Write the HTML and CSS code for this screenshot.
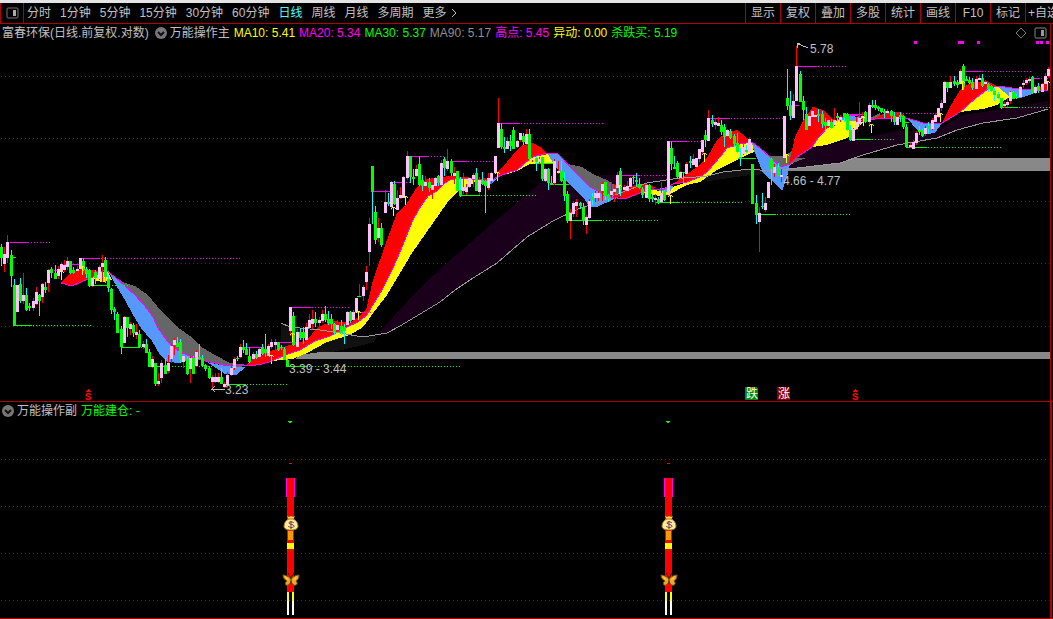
FILE: index.html
```html
<!DOCTYPE html>
<html lang="zh-CN">
<head>
    <meta charset="UTF-8">
    <meta name="viewport" content="width=device-width, initial-scale=1.0">
    <title>富春环保 日线</title>
    <link rel="stylesheet" href="styles.css">
</head>
<body>
    <header class="toolbar">
        <button class="layout-btn" aria-label="布局">
            <svg width="13" height="12" viewBox="0 0 13 12"><rect x="1" y="1" width="11" height="10" rx="1" fill="none" stroke="#777"/><rect x="7" y="3" width="3" height="6" fill="#aaa"/></svg>
        </button>
        <nav class="periods">
            <button>分时</button>
            <button>1分钟</button>
            <button>5分钟</button>
            <button>15分钟</button>
            <button>30分钟</button>
            <button>60分钟</button>
            <button class="active">日线</button>
            <button>周线</button>
            <button>月线</button>
            <button>多周期</button>
            <button class="more">更多<svg width="7" height="10" viewBox="0 0 7 10"><path d="M1 1l4 4-4 4" fill="none" stroke="#c0c0c0"/></svg></button>
        </nav>
        <div class="tools">
            <button>显示</button>
            <button>复权</button>
            <button>叠加</button>
            <button>多股</button>
            <button>统计</button>
            <button>画线</button>
            <button>F10</button>
            <button>标记</button>
            <button class="cut">+自选</button>
        </div>
    </header>
    <main>
        <section class="panel main-panel">
            <div class="legend">
                <span class="stock">富春环保(日线.前复权.对数)</span>
                <button class="fold" aria-label="主图指标"><svg width="13" height="13" viewBox="0 0 13 13"><circle cx="6" cy="6" r="6" fill="#777"/><path d="M3 5l3 3 3-3" fill="none" stroke="#111" stroke-width="2"/></svg></button>
                <span class="name">万能操作主</span>
                <span class="yellow">MA10: 5.41</span>
                <span class="magenta">MA20: 5.34</span>
                <span class="green">MA30: 5.37</span>
                <span class="gray">MA90: 5.17</span>
                <span class="magenta">高点: 5.45</span>
                <span class="yellow">异动: 0.00</span>
                <span class="green">杀跌买: 5.19</span>
                <span class="corner">
                    <svg width="11" height="11" viewBox="0 0 11 11"><path d="M5 0l5 5-5 5-5-5z" fill="none" stroke="#777"/></svg>
                    <svg width="13" height="12" viewBox="0 0 13 12"><rect x="1" y="1" width="11" height="10" rx="1" fill="none" stroke="#888"/><rect x="7" y="3" width="3" height="6" fill="#999"/></svg>
                </span>
            </div>
            <svg class="chart" viewBox="0 40 1053 361" role="img" aria-label="K线图">
                <path id="gridMain" class="grid"/>
                <g class="bands">
                    <!-- long term cloud -->
                    <path fill="#111" d="M281 323L290 327 320 330 340 333 363 337 377 336 374 342 363 345 333 352 307 357 281 360z"/>
                    <path fill="#111" d="M700 177L723 172 750 169 770 171 784 170 784 173 750 175 730 178 708 181z"/>
                    <path fill="#1a001a" d="M377 335L393 317 420 288 447 263 493 223 540 183 552 174 665 176 680 179 647 183 620 193 600 202 580 208 553 221 527 237 497 263 470 280 455 290 440 302 400 326 387 333z"/>
                    <!-- support zones -->
                    <path fill="#888" d="M295 359L300 355 320 352H1050V359z"/>
                    <path fill="#888" d="M786 171L790 162 806 158H1050V171z"/>
                    <path fill="#1a001a" d="M787 168L813 147 853 140 897 131 937 130 963 115 997 110 1048 101V109L1017 118 983 123 957 130 937 138 897 145 863 155 840 163 797 168z"/>
                    <!-- falling clouds -->
                    <path fill="#666" d="M115 277L125 283 135 286 148 295 157 306 170 320 180 329 190 336 200 346 215 355 230 363 248 365 240 367 225 366 205 361 195 358 180 352 168 342 158 328 153 317 145 306 135 295 125 286z"/>
                    <path fill="#666" d="M568 164L582 167 593 174 607 180 618 187 625 193 617 198 603 195 590 187 580 177z"/>
                    <path fill="#666" d="M767 156H785L792 151 794 158 806 158 790 164 781 167zM868 119L880 113 880 118z"/>
                    <path fill="#59f" d="M108 271L115 277 125 286 135 295 145 306 153 317 158 328 168 342 180 352 195 358 190 359 180 363 168 362 160 355 152 341 141 328 133 315 125 300 117 287zM207 362L225 366 246 367 236 375 225 374z"/>
                    <path fill="#59f" d="M545 153H557L562 158 570 167 580 177 590 187 600 192 617 198 612 200 597 207H590L585 200 570 185 563 177 550 158z"/>
                    <path fill="#59f" d="M751 142L760 148 770 157 781 167 790 164 787 177 782 191 777 185 763 173 755 153zM657 189L673 186 671 193 664 194zM480 181H492L497 178 491 184z"/>
                    <path fill="#59f" d="M838 119L847 115 858 117 862 121 850 124zM907 118L923 123 942 123 935 133 927 134 917 130zM997 86L1020 89 1038 91 1030 95 1020 98 1010 97z"/>
                    <!-- rising clouds -->
                    <path fill="red" d="M61 283L66 277 73 271 84 269 98 271 102 272 90 278 80 282 72 286zM197 357l6 1 3 4-9-3z"/>
                    <path fill="red" d="M245 366L253 358 273 350 307 340 318 327 333 321 350 323 357 318 366 310 373 280 387 240 397 213 407 203 417 187 427 179 450 176 475 178 450 180 445 183 437 191 428 196 419 209 413 220 408 232 403 245 393 268 382 290 371 308 367 315 358 322 347 327 330 336 315 341 300 350 285 355 272 361 262 364z"/>
                    <path fill="red" d="M475 180L485 178 490 180 480 182zM497 177L498 172 507 162 517 150 523 145 533 143 540 147 548 154 533 157 525 163 517 170 507 173z"/>
                    <path fill="red" d="M612 197L623 191 637 184H647L657 188 650 189 640 193 627 198z"/>
                    <path fill="red" d="M673 184L683 177 697 167 707 158 717 140 727 132 737 130 747 138 752 142 740 144 727 148 720 157 707 172 700 177 687 182z"/>
                    <path fill="red" d="M789 164L795 137 803 121 813 107 823 110 833 119 837 120 827 128 818 138 812 147 797 157zM873 119L887 112H900L907 118z"/>
                    <path fill="red" d="M942 123L950 107 960 90 970 83 987 81 997 86 988 89 977 97 960 112zM1034 91L1048 82V91z"/>
                    <path fill="#ff0" d="M92 277L100 272 108 272 112 280 104 282 96 281z"/>
                    <path fill="#ff0" d="M272 361L285 355 300 350 315 341 330 336 347 327 358 322 367 315 371 308 382 290 393 268 403 245 408 232 413 220 419 209 428 196 437 191 445 183 450 180 457 178 470 178 477 181 467 187 457 192 447 203 433 223 412 253 387 295 377 308 363 327 350 335 327 342 307 353 293 359z"/>
                    <path fill="#ff0" d="M497 177L507 173 517 170 525 163 533 157 548 154 553 163 540 164 530 164 517 171zM640 193L650 190 663 191 668 193 664 197 650 194z"/>
                    <path fill="#ff0" d="M673 187L687 182 700 177 707 172 720 157 727 148 740 144 752 142 754 152 747 155 733 162 717 170 700 182 687 185 668 195z"/>
                    <path fill="#ff0" d="M812 147L818 138 827 128 837 120 850 121 863 122 855 130 847 138 827 145zM960 112L977 97 988 89 997 86 1010 97 997 105 983 109z"/>
                </g>
                <polyline class="ma20" points="61,283 72,286 90,278 105,270 115,277 125,286 135,295 145,306 153,317 158,328 168,342 180,352 195,358 205,361 225,365 250,366 262,364 272,361 285,355 300,350 315,341 330,336 347,327 358,322 367,315 371,308 382,290 393,268 403,245 408,232 413,220 419,209 428,196 437,191 445,183 450,180 457,178 470,178 475,180 492,180 497,177 507,173 517,170 525,163 533,157 543,154 557,153 562,158 570,167 580,177 590,187 600,192 603,195 617,198 627,198 640,193 650,189 663,190 673,184 687,182 700,177 707,172 720,157 727,148 740,144 752,142 760,148 770,157 781,167 790,164 797,157 812,147 818,138 827,128 837,120 847,115 858,116 865,121 880,118 907,118 923,123 942,123 960,112 977,97 988,89 997,86 1020,89 1048,91"/>
                <polyline class="ma90" points="281,323 290,327 320,330 340,333 363,337 387,333 400,326 440,302 455,290 470,280 497,263 527,237 553,221 580,208 597,203 620,193 647,183 673,179 707,176 723,172 750,169 770,171 797,168 840,163 863,155 897,145 937,138 957,130 983,123 1017,118 1048,109"/>
                <path id="levelsHigh" fill="#f0f"/>
                <path id="levelsLow" fill="#0f0"/>
                <path id="wickUp" fill="red"/>
                <path id="wickDown" fill="#0ff"/>
                <path id="bodyUp" fill="#ffc0ff"/>
                <path id="bodyDown" fill="#0f0"/>
                <path id="flags" fill="#ff0"/>
                <path fill="#f0f" d="M914 41h3v3h-3zM958 41h6v3h-6zM977 41h3v3h-3zM1036 41h3v3h-3zM1040 41h3v3h-3zM1046 41h3v3h-3z"/>
                <g class="marks">
                    <path d="M800 43h-3v5M797 44l4 1 7 3"/>
                    <path d="M225 389h-13l3-3M212 389l3 3"/>
                    <text x="810" y="53">5.78</text>
                    <text x="225" y="394">3.23</text>
                    <text x="289" y="373">3.39 - 3.44</text>
                    <text x="783" y="185">4.66 - 4.77</text>
                </g>
                <g class="signs">
                    <path fill="red" d="M85 392l3-3 3 3zM852 392l3-3 3 3z"/>
                    <text class="dollar" x="88" y="400">S</text>
                    <text class="dollar" x="855" y="400">S</text>
                    <path fill="#080" d="M745 387h11l2 2v11h-13z"/>
                    <path fill="#800" d="M777 387h11l2 2v11h-13z"/>
                    <text x="752" y="398">跌</text>
                    <text x="784" y="398">涨</text>
                </g>
            </svg>
        </section>
        <section class="panel sub-panel">
            <div class="legend">
                <button class="fold" aria-label="副图指标"><svg width="13" height="13" viewBox="0 0 13 13"><circle cx="6" cy="6" r="6" fill="#777"/><path d="M3 5l3 3 3-3" fill="none" stroke="#111" stroke-width="2"/></svg></button>
                <span class="name">万能操作副</span>
                <span class="green">万能建仓: -</span>
            </div>
            <svg class="chart" viewBox="0 418 1053 200" role="img" aria-label="副图">
                <defs>
                    <g id="signal">
                        <path fill="#0f0" d="M-3 421h4v1h-1v1h-2v-1h-1z"/>
                        <path fill="red" d="M-2 463h3v1h-3z"/>
                        <path fill="#f0f" d="M-5 478h9v19h-9z"/>
                        <path fill="red" d="M-4 478h7v114h-7z"/>
                        <path fill="#f90" d="M-3 531h5v9h-5z"/>
                        <path fill="#ff0" d="M-4 543h7v6h-7zM-4 592h2v9h-2zM1 592h2v9h-2z"/>
                        <path fill="#fff" d="M-4 601h2v14h-2zM1 601h2v14h-2z"/>
                        <g class="smooth">
                            <path fill="#fd3" d="M-4 516l2 1 2-1 2 1 2-1-2 4h-4z"/>
                            <path fill="#ffeb9a" stroke="#a87820" d="M-2 519h4c3 1 5 4 5 7 0 3-3 4-7 4s-7-1-7-4c0-3 2-6 5-7z"/>
                            <circle cy="525" r="3" fill="#fff4cf"/>
                            <path fill="none" stroke="#733028" d="M3 523c-1-1-5-2-5 0s5 1 5 3-4 2-6 0M0 521v8"/>
                        </g>
                        <g class="smooth">
                            <path fill="#e8ab20" stroke="#85500c" d="M0 579c-3-3-6-4-8-4 0 3 2 5 4 6-2 1-2 3-1 4 2 1 4-1 5-4 1 3 3 5 5 4 2-1 1-3 0-4 2-1 3-3 3-6-3 0-5 1-8 4z"/>
                            <path fill="#ffd65a" d="M-6 576l4 4-3-1zM6 576l-4 4 3-1z"/>
                            <path fill="none" stroke="#421" d="M-3 573l3 5 3-5M0 578v6"/>
                        </g>
                    </g>
                </defs>
                <path id="gridSub" class="grid"/>
                <use href="#signal" x="291"/>
                <use href="#signal" x="669"/>
            </svg>
        </section>
    </main>
    <script src="script.js"></script>
</body>
</html>
```
FILE: styles.css
```css
body {
    margin: 0;
    background: #000;
    color: #c0c0c0;
    font-family: "Liberation Sans", "Noto Sans CJK SC", sans-serif;
    font-size: 12px;
    line-height: 16px;
}
button {
    padding: 0;
    border: none;
    background: none;
    color: inherit;
    font: inherit;
    white-space: nowrap;
    cursor: pointer;
}
.toolbar {
    display: flex;
    height: 20px;
    border-top: 3px solid #e4e4e4;
    border-bottom: 1px solid #b00000;
    overflow: hidden;
}
.layout-btn {
    display: flex;
    align-items: center;
    justify-content: center;
    width: 24px;
    border-left: 1px solid #b00000;
    border-right: 1px solid #b00000;
    box-sizing: border-box;
    flex: none;
}
.periods {
    display: flex;
    gap: 9px;
    padding-left: 3px;
    flex: 1;
}
.periods .active {
    color: #54fcfc;
}
.more {
    display: flex;
    align-items: center;
    gap: 4px;
}
.tools {
    display: flex;
    flex: none;
}
.tools button {
    width: 35px;
    border-left: 1px solid #b00000;
    box-sizing: border-box;
}
.tools .cut {
    width: 28px;
    padding-left: 2px;
    text-align: left;
    overflow: hidden;
}
.panel {
    border-bottom: 1px solid #b00000;
    background: linear-gradient(#b00000, #b00000) no-repeat right 2px top / 1px 100%;
}
.sub-panel {
    background-size: 2px 100%;
    background-position: right 1px top;
}
.legend {
    display: flex;
    align-items: center;
    gap: 4px;
    box-sizing: border-box;
    height: 16px;
    padding: 2px 6px 0 2px;
    white-space: nowrap;
}
.stock {
    margin-right: 2px;
}
.fold {
    display: flex;
}
.fold + .name {
    margin-left: -2px;
}
.corner {
    display: flex;
    align-items: center;
    gap: 7px;
    margin-left: auto;
}
.yellow {
    color: #ff0;
}
.magenta {
    color: #f0f;
}
.green {
    color: #0f0;
}
.gray {
    color: #909090;
}
.chart {
    display: block;
    width: 100%;
    height: auto;
    overflow: visible;
    shape-rendering: crispEdges;
}
.grid {
    fill: #b00000;
}
.ma20 {
    fill: none;
    stroke: #f0f;
}
.ma90 {
    fill: none;
    stroke: #999;
}
.marks path {
    fill: none;
    stroke: #c0c0c0;
}
.marks text {
    fill: #c0c0c0;
}
.signs text {
    fill: #fff;
    text-anchor: middle;
}
.signs .dollar {
    fill: red;
    font-family: "Liberation Mono", monospace;
    font-weight: bold;
    font-size: 11px;
}
.smooth {
    shape-rendering: auto;
}
```
FILE: script.js
```javascript
// x, high, body top, body bottom, low; u = up, d = down
const candles = `
1 244 247 258 266 d,4 247 254 264 272 u,7 235 242 258 263 u,11 250 255 276 287 d,14 279 285 326 326 d,17 285 285 312 312 u,20 278 284 301 303 d,23 273 295 301 304 u,26 288 295 310 311 d,29 303 306 308 311 d,
33 298 301 308 311 u,36 287 292 304 305 u,39 294 295 301 316 d,42 283 284 297 303 u,45 282 287 290 293 d,48 269 270 283 292 u,51 267 269 273 278 d,55 265 273 279 279 d,58 266 269 276 279 u,61 262 264 271 273 u,
64 260 265 270 272 u,67 257 261 267 270 u,70 261 261 273 274 d,73 267 270 273 274 d,77 266 269 271 272 u,80 258 258 269 270 u,83 258 261 270 271 d,86 267 269 274 278 d,89 269 270 286 287 d,92 275 278 286 287 u,
95 270 272 278 284 d,99 265 267 279 280 u,102 255 263 267 282 u,105 257 260 277 283 d,108 275 279 288 292 d,111 288 289 310 314 d,114 307 309 312 320 d,117 312 314 333 333 d,121 326 329 347 354 d,124 316 317 343 343 u,
127 317 317 328 337 d,130 322 324 329 335 u,133 323 325 333 337 d,136 324 332 335 339 u,139 330 334 347 348 d,143 341 344 347 349 u,146 339 344 353 353 d,149 349 352 367 367 d,152 356 359 367 368 u,155 363 363 384 386 d,
158 373 381 384 386 u,161 360 363 378 383 u,165 358 365 374 374 d,168 355 363 371 373 u,171 344 346 359 363 u,174 338 340 345 355 u,177 337 343 347 347 d,180 339 342 360 363 d,183 356 356 362 368 u,187 356 359 374 375 d,
190 356 358 369 383 u,193 356 358 374 374 d,196 350 352 366 367 u,199 344 357 359 360 d,202 355 358 366 367 d,205 364 365 369 371 d,209 366 368 378 379 d,212 375 377 382 389 u,215 373 377 382 383 u,218 373 377 382 383 u,
221 368 377 384 384 d,224 382 384 387 388 u,227 372 375 385 388 u,231 364 368 375 376 u,234 357 359 368 370 u,237 356 358 359 361 d,240 344 347 357 358 u,243 340 347 350 353 d,246 343 349 355 355 d,249 347 356 362 363 d,
253 352 354 359 359 u,256 351 354 358 359 d,259 347 349 357 357 u,262 344 347 354 355 d,265 334 349 353 357 d,268 344 346 356 357 u,271 339 342 347 349 u,275 339 342 345 349 u,278 342 342 350 351 d,281 345 347 348 350 d,
284 347 349 360 360 d,287 358 360 367 367 d,290 307 307 331 336 u,293 312 316 345 346 d,297 329 332 347 351 u,300 328 332 338 340 d,303 327 332 338 344 d,306 323 327 340 340 u,309 314 320 328 329 u,312 310 319 324 329 u,
315 312 319 323 327 d,319 317 320 323 327 u,322 310 314 321 323 u,325 306 314 320 322 d,328 311 319 323 325 d,331 314 319 324 329 d,334 323 324 332 335 d,337 320 325 330 331 u,341 320 326 333 335 d,344 324 327 331 344 d,
347 311 312 325 327 u,350 311 312 321 323 d,353 310 312 320 322 u,356 298 298 312 313 u,363 285 287 296 301 u,366 266 272 282 290 u,369 218 224 252 266 u,372 166 166 192 224 d,375 206 212 240 244 d,378 218 228 238 242 u,
381 223 228 245 247 d,385 190 202 213 213 u,388 193 202 204 206 d,391 181 182 207 210 u,394 181 184 204 205 d,397 190 198 210 210 u,400 187 195 198 199 u,403 176 177 198 198 u,407 151 156 178 180 u,410 156 156 177 183 d,
413 169 177 179 185 d,416 165 169 176 177 u,419 156 164 185 186 d,422 175 180 186 191 d,425 176 182 186 186 u,429 178 182 188 192 d,432 185 185 190 199 u,435 177 178 186 190 u,438 175 176 183 186 d,441 160 163 185 185 u,
444 157 159 168 176 d,447 149 161 169 171 u,451 159 161 173 176 d,454 167 173 176 184 u,457 171 171 191 191 d,460 177 190 196 197 d,463 173 187 191 194 u,466 184 187 192 195 u,469 178 178 187 188 u,473 173 175 179 187 u,
476 168 173 191 191 d,479 177 180 192 195 u,482 172 180 184 185 d,485 180 181 186 213 d,488 173 178 188 190 u,491 172 173 181 184 u,495 156 156 173 173 u,498 98 123 148 148 u,501 123 129 147 149 d,504 137 147 149 153 d,
507 137 141 149 149 u,510 135 141 146 151 d,513 127 130 149 149 d,517 140 141 147 148 u,520 133 133 140 142 u,523 133 136 142 145 d,526 129 134 144 145 u,529 129 134 159 161 d,532 157 158 160 162 u,536 156 158 162 171 d,
539 157 159 162 164 u,542 157 157 179 181 d,545 168 169 181 182 u,548 168 169 183 190 d,551 176 183 184 185 d,554 159 161 183 185 u,558 161 171 173 174 u,561 161 171 181 182 d,564 172 180 196 201 d,567 191 194 221 223 d,
570 209 213 221 239 u,573 201 203 214 217 u,576 199 202 206 217 u,580 202 203 206 209 d,583 203 207 221 225 d,586 215 217 225 234 u,589 199 201 218 219 u,592 193 197 200 205 d,595 191 193 198 202 u,598 191 193 198 201 u,
602 182 184 191 201 u,605 182 182 196 200 d,608 194 195 199 202 d,611 182 191 195 198 u,614 184 189 192 202 u,617 172 175 188 190 u,620 168 171 190 196 d,624 185 187 190 191 u,627 181 186 191 191 u,630 177 178 187 188 u,
633 175 177 178 184 d,636 173 180 182 186 d,639 178 184 188 189 d,642 187 189 195 198 d,646 185 185 198 198 u,649 184 185 199 202 d,652 195 197 199 202 d,655 194 198 200 205 u,658 197 199 203 204 d,661 182 193 202 202 u,
664 190 191 200 201 d,668 141 141 195 197 u,671 141 148 164 170 d,674 156 167 169 169 d,677 161 163 177 179 d,680 171 172 178 179 u,683 172 172 173 183 d,686 162 164 174 174 u,690 156 161 163 168 d,693 154 159 165 165 u,
696 158 158 167 167 u,699 149 149 159 162 u,702 140 140 152 155 u,705 130 135 140 147 d,708 110 118 141 141 u,712 115 120 124 127 d,715 118 122 125 129 u,718 117 123 126 126 u,721 120 125 132 135 d,724 124 127 137 147 d,
727 129 130 136 136 u,730 129 131 138 139 d,734 134 136 144 147 d,737 133 143 152 153 d,740 148 157 158 166 d,743 144 147 154 155 u,746 145 150 152 153 d,749 137 139 152 152 u,752 164 164 204 204 d,756 195 203 215 224 d,
759 207 213 222 252 u,762 193 206 207 209 d,765 197 203 210 212 u,768 182 182 198 198 u,771 158 159 169 185 d,774 164 167 173 177 u,778 163 167 176 176 d,781 169 175 177 182 u,784 116 116 158 158 u,787 69 98 106 110 d,
790 91 106 116 120 d,793 94 101 118 118 u,796 46 66 101 101 u,800 71 74 102 102 d,803 96 101 110 120 d,806 107 114 130 130 d,809 115 116 126 126 u,812 107 111 117 120 u,815 109 115 117 122 u,818 109 114 116 122 d,
822 111 114 124 128 d,825 118 122 126 130 d,828 118 120 126 128 u,831 119 122 128 129 d,834 108 120 125 126 u,837 113 116 118 122 d,840 115 117 120 122 u,844 113 113 118 122 d,847 113 114 130 131 d,850 125 130 140 141 d,
853 128 129 141 141 u,856 117 122 129 130 u,859 102 118 124 126 u,862 112 116 118 122 u,865 111 112 122 123 d,869 103 105 122 127 u,872 100 105 107 108 d,875 100 105 108 110 d,878 106 107 109 111 d,881 108 108 112 113 d,
884 109 111 113 118 d,887 109 111 113 116 u,891 110 111 116 122 d,894 112 116 122 125 d,897 114 117 125 125 u,900 112 115 117 122 d,903 115 116 127 129 d,906 124 127 147 148 d,910 143 145 147 148 u,913 140 142 149 149 u,
916 131 133 143 145 u,919 126 130 132 135 d,922 129 130 136 137 d,925 126 128 134 136 u,928 122 126 129 134 d,932 118 120 129 130 u,935 113 115 122 122 u,938 108 108 117 118 u,941 100 103 108 111 u,944 81 82 103 103 u,
947 82 82 88 92 d,950 76 82 88 88 u,954 76 81 84 86 d,957 80 82 85 88 d,960 69 71 84 84 u,963 64 66 87 90 d,966 76 79 81 81 d,969 77 80 83 84 d,972 78 82 88 90 d,976 76 79 89 89 u,979 75 78 80 80 u,982 74 78 86 87 d,
985 80 82 84 86 u,988 83 84 89 92 d,991 85 86 91 92 d,994 88 91 95 101 d,998 92 94 98 99 d,1001 98 98 108 109 d,1004 102 104 106 108 u,1007 98 102 105 107 u,1010 91 92 101 104 u,1013 91 92 99 99 d,1016 94 96 98 99 d,
1020 86 87 97 97 u,1023 80 83 85 88 u,1026 78 80 83 85 u,1029 77 79 81 83 u,1032 76 77 93 94 d,1035 85 87 93 94 u,1038 83 86 91 93 d,1042 83 84 92 92 u,1045 73 76 84 84 u,1048 67 69 76 78 u`;

// x from, solid until, dots until, y
const highs = [
    [10, 27, 50, 242], [80, 100, 242, 258], [54, 62, 62, 270], [64, 80, 80, 264], [243, 262, 262, 347], [275, 297, 297, 342],
    [290, 311, 350, 307], [355, 363, 375, 312], [373, 390, 390, 191], [392, 402, 410, 182], [407, 427, 446, 156],
    [450, 467, 498, 161], [498, 520, 604, 123], [603, 612, 620, 184], [622, 640, 666, 175], [668, 687, 702, 141],
    [708, 730, 783, 118], [796, 817, 846, 66], [848, 862, 868, 114], [884, 884, 938, 113], [963, 981, 1032, 71],
    [1031, 1040, 1050, 78], [787, 799, 799, 105]
];
const lows = [
    [10, 16, 16, 257], [14, 32, 92, 325], [94, 108, 130, 285], [121, 140, 150, 347], [155, 162, 216, 366], [228, 246, 289, 384],
    [287, 308, 462, 366], [460, 480, 538, 195], [535, 555, 555, 163], [550, 569, 569, 184], [568, 602, 660, 220],
    [655, 680, 742, 202], [738, 756, 758, 158], [757, 776, 852, 214], [852, 871, 896, 139], [906, 927, 1003, 147],
    [1000, 1018, 1050, 107], [903, 909, 909, 122]
];
const flags = [[61, 271], [82, 266], [271, 355], [292, 333], [358, 311], [393, 207], [405, 196], [497, 172], [619, 185], [670, 195], [704, 153],
    [786, 154], [863, 117], [871, 124], [940, 113], [962, 81], [1047, 81]];

function rect(x, y, w, h) {
    return `M${x} ${y}h${w}v${h}h${-w}z`;
}

function dots(from, to, y, step) {
    let d = '';
    for (let x = from; x < to; x += step) {
        d += rect(x, y, 1, 1);
    }
    return d;
}

function draw(id, d) {
    document.getElementById(id).setAttribute('d', d);
}

function levels(list) {
    return list.map(([x, solid, end, y]) => rect(x, y, solid - x, 1) + dots(solid + 1, end, y, 3)).join('');
}

const paths = { wickUp: '', wickDown: '', bodyUp: '', bodyDown: '' };
candles.trim().split(/,\s*/).forEach(row => {
    const [x, high, top, bottom, low, kind] = row.split(' ');
    const side = kind === 'u' ? 'Up' : 'Down';
    paths['wick' + side] += rect(+x, high, 1, low - high);
    paths['body' + side] += rect(x - 1, top, 3, Math.max(1, bottom - top));
});
// doji with a red upper wick
paths.wickUp += rect(359, 284, 1, 13);
paths.bodyDown += rect(357, 296, 4, 1);

Object.keys(paths).forEach(id => draw(id, paths[id]));
draw('levelsHigh', levels(highs));
draw('levelsLow', levels(lows));
draw('flags', flags.map(([x, y]) => rect(x - 1, y, 3, 1) + rect(x - 2, y + 1, 1, 1) + rect(x + 2, y + 1, 1, 1) + rect(x, y, 1, 9)).join(''));
draw('gridMain', [76, 138, 201, 263, 326].map(y => dots(1, 1053, y, 4)).join(''));
draw('gridSub', [459, 506, 553, 600].map(y => dots(1, 1053, y, 4)).join(''));
```
